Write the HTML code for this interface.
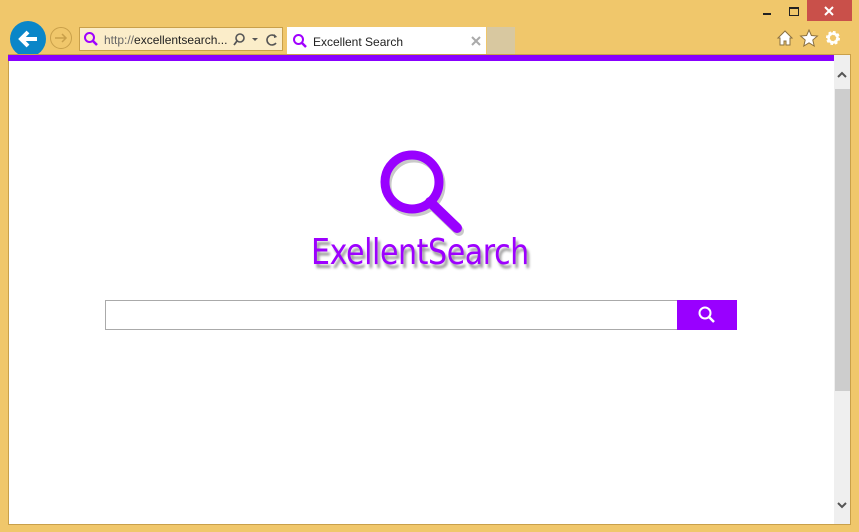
<!DOCTYPE html>
<html><head><style>
body{margin:0;width:859px;height:532px;background:#f0c76b;position:relative;overflow:hidden;font-family:"Liberation Sans",sans-serif}
.abs{position:absolute}
</style></head><body>
<!-- window controls -->
<div class="abs" style="left:807px;top:0;width:45px;height:21px;background:#c9504a"></div>
<svg class="abs" style="left:823px;top:5px" width="12" height="12"><path d="M2 2l8 8M10 2l-8 8" stroke="#fff" stroke-width="2"/></svg>
<div class="abs" style="left:763px;top:13px;width:8px;height:2px;background:#222"></div>
<div class="abs" style="left:789px;top:7px;width:8px;height:6px;border:1px solid #222;border-top-width:2px"></div>
<!-- back/forward -->
<div class="abs" style="left:10px;top:21px;width:36px;height:36px;border-radius:50%;background:#0a86c8"></div>
<svg class="abs" style="left:10px;top:21px" width="36" height="36"><path d="M27 18H11M18 11l-7 7 7 7" stroke="#fff" stroke-width="4" fill="none"/></svg>
<div class="abs" style="left:50px;top:27px;width:22px;height:22px;border-radius:50%;border:1px solid #c9a04a;box-sizing:border-box"></div>
<svg class="abs" style="left:50px;top:27px" width="22" height="22"><path d="M5 11h11M12 7l4 4-4 4" stroke="#c9a04a" stroke-width="1.5" fill="none"/></svg>
<!-- address -->
<div class="abs" style="left:79px;top:27px;width:204px;height:24px;background:#fbedc9;border:1px solid #c9a04a;box-sizing:border-box"></div>
<svg class="abs" style="left:83px;top:31px" width="16" height="16"><circle cx="6.5" cy="6.5" r="4.5" stroke="#a000ff" stroke-width="2" fill="none"/><path d="M10 10l4 4" stroke="#a000ff" stroke-width="2.5"/></svg>
<div class="abs" style="left:104px;top:33px;font-size:12px;color:#222"><span style="color:#666">http://</span>excellentsearch...</div>
<svg class="abs" style="left:232px;top:32px" width="50" height="16"><circle cx="8" cy="6" r="4" stroke="#555" stroke-width="1.6" fill="none"/><path d="M5 9l-3 4" stroke="#555" stroke-width="1.8"/><path d="M20 6h6l-3 3z" fill="#555"/><path d="M44 5a5 5 0 1 0 0 6" stroke="#555" stroke-width="1.6" fill="none"/><path d="M42 2l3 3-3 1z" fill="#555"/></svg>
<!-- tab -->
<div class="abs" style="left:287px;top:27px;width:199px;height:27px;background:#fff"></div>
<svg class="abs" style="left:292px;top:33px" width="16" height="16"><circle cx="6.5" cy="6.5" r="4.5" stroke="#a000ff" stroke-width="2" fill="none"/><path d="M10 10l4 4" stroke="#a000ff" stroke-width="2.5"/></svg>
<div class="abs" style="left:313px;top:35px;font-size:12px;color:#222">Excellent Search</div>
<svg class="abs" style="left:471px;top:36px" width="10" height="10"><path d="M1 1l8 8M9 1l-8 8" stroke="#aaa" stroke-width="2"/></svg>
<div class="abs" style="left:487px;top:27px;width:28px;height:27px;background:#d8c8a0"></div>
<!-- right icons -->
<svg class="abs" style="left:776px;top:29px" width="66" height="18">
<path d="M9 2L2 9h2v7h4v-4h2v4h4V9h2z" fill="#fff" stroke="#8a7040" stroke-width="1"/>
<path d="M33 1l2.4 5.5 6 .5-4.6 4 1.4 6-5.2-3.2-5.2 3.2 1.4-6-4.6-4 6-.5z" fill="#fff" stroke="#8a7040" stroke-width="1"/>
<circle cx="57" cy="9" r="5" fill="none" stroke="#fff" stroke-width="4" stroke-dasharray="2.2 1.7"/>
<circle cx="57" cy="9" r="4.5" fill="none" stroke="#fff" stroke-width="2.5"/>
</svg>
<!-- content -->
<div class="abs" style="left:8px;top:54px;width:843px;height:471px;background:#fff;border:1px solid #c9a04a;box-sizing:border-box"></div>
<div class="abs" style="left:8px;top:55px;width:826px;height:6px;background:#8800ff"></div>
<div class="abs" style="left:834px;top:55px;width:16px;height:469px;background:#efefef"></div>
<div class="abs" style="left:835px;top:89px;width:15px;height:302px;background:#cdcdcd"></div>
<svg class="abs" style="left:836px;top:70px" width="12" height="10"><path d="M2 7l4-4 4 4" stroke="#555" stroke-width="2" fill="none"/></svg>
<svg class="abs" style="left:836px;top:500px" width="12" height="10"><path d="M2 3l4 4 4-4" stroke="#555" stroke-width="2" fill="none"/></svg>
<!-- logo -->
<svg class="abs" style="left:370px;top:145px" width="110" height="100">
<g transform="translate(2,3)" opacity="0.35"><circle cx="42" cy="37" r="27" stroke="#666" stroke-width="9" fill="none"/><path d="M60 57l27 26" stroke="#666" stroke-width="10" stroke-linecap="round"/></g>
<circle cx="42" cy="37" r="27" stroke="#9900ff" stroke-width="9" fill="none"/>
<path d="M60 57l27 26" stroke="#9900ff" stroke-width="10" stroke-linecap="round"/>
</svg>
<div class="abs" style="left:311px;top:232px;font-size:36px;color:#9d00ff;text-shadow:3px 4px 3px #999;letter-spacing:-0.5px;font-family:'DejaVu Sans',sans-serif;font-weight:normal;transform:scaleX(0.835);transform-origin:left">ExellentSearch</div>
<!-- search -->
<div class="abs" style="left:105px;top:300px;width:573px;height:30px;border:1px solid #aaa;box-sizing:border-box"></div>
<div class="abs" style="left:677px;top:300px;width:60px;height:30px;background:#9900ff"></div>
<svg class="abs" style="left:695px;top:304px" width="24" height="24"><circle cx="10" cy="9" r="5.5" stroke="#fff" stroke-width="2" fill="none"/><path d="M14 13l5 5" stroke="#fff" stroke-width="2.5"/></svg>
</body></html>
